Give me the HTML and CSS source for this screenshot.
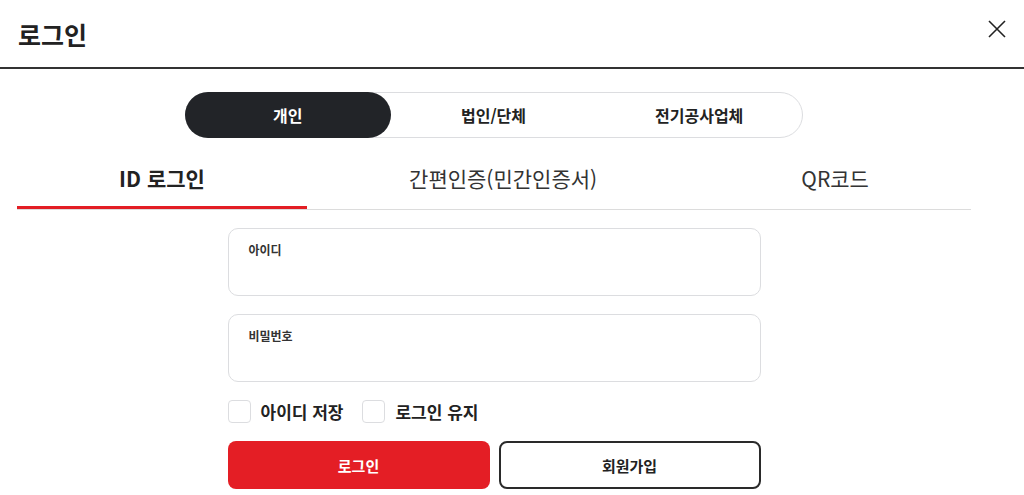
FILE: index.html
```html
<!DOCTYPE html>
<html lang="ko">
<head>
  <meta charset="UTF-8" />
  <title>로그인</title>
  <link rel="stylesheet" href="styles.css">
</head>
<body>
  <div class="header">
    <h2>로그인</h2>
    <button class="close" aria-label="닫기">
      <svg width="20" height="20" viewBox="0 0 20 20"><path d="M2 2L18 18M18 2L2 18" stroke="#222" stroke-width="1.6" fill="none"/></svg>
    </button>
  </div>

  <div class="content">
    <div class="segment">
      <button class="seg active">개인</button>
      <button class="seg">법인/단체</button>
      <button class="seg">전기공사업체</button>
    </div>

    <div class="tabs">
      <div class="tab active">ID 로그인</div>
      <div class="tab">간편인증(민간인증서)</div>
      <div class="tab">QR코드</div>
    </div>

    <div class="form">
      <label class="field">
        <span>아이디</span>
        <input type="text">
      </label>
      <label class="field">
        <span>비밀번호</span>
        <input type="password">
      </label>

      <div class="checks">
        <label class="check"><span class="box"></span>아이디 저장</label>
        <label class="check"><span class="box"></span>로그인 유지</label>
      </div>

      <div class="buttons">
        <button class="btn primary">로그인</button>
        <button class="btn outline">회원가입</button>
      </div>
    </div>
  </div>
</body>
</html>
```

FILE: styles.css
```css
body {
  margin: 0;
  font-family: "Noto Sans CJK KR", "Noto Sans", sans-serif;
  color: #222;
  background: #fff;
}
button {
  font-family: inherit;
  cursor: pointer;
}
.header {
  height: 67px;
  border-bottom: 2px solid #333;
  display: flex;
  align-items: center;
  justify-content: space-between;
  padding: 0 17px 0 18px;
}
.header h2 {
  margin: 0;
  font-size: 25px;
  font-weight: 700;
  color: #222;
}
.close {
  border: none;
  background: none;
  padding: 0;
  width: 20px;
  height: 20px;
  margin-top: -10px;
}
.content {
  width: 954px;
  margin-left: 17px;
}
.segment {
  width: 616px;
  height: 44px;
  margin: 23px auto 0;
  border: 1px solid #dcdde0;
  border-radius: 23px;
  display: flex;
}
.seg {
  flex: 1;
  border: none;
  background: none;
  border-radius: 23px;
  font-size: 16px;
  font-weight: 700;
  color: #222;
  margin: -1px 0;
}
.seg.active {
  background: #222428;
  color: #fff;
  margin-left: -1px;
}
.tabs {
  display: flex;
  margin-top: 20px;
  border-bottom: 1px solid #dcdcdc;
}
.tab {
  flex: 1 1 auto;
  text-align: center;
  font-size: 21px;
  line-height: 28px;
  padding: 6px 0 14px;
  color: #333;
  border-bottom: 3px solid transparent;
}
.tab.active {
  font-weight: 700;
  color: #222;
  border-bottom-color: #e31e24;
}
.form {
  width: 533px;
  margin: 18px auto 0;
}
.field {
  display: block;
  height: 66px;
  border: 1px solid #dcdde0;
  border-radius: 10px;
  padding: 0 20px;
  margin-bottom: 18px;
}
.field span {
  display: block;
  font-size: 12px;
  font-weight: 700;
  color: #333;
  margin-top: 12px;
  line-height: 18px;
}
.field input {
  border: none;
  outline: none;
  width: 100%;
  font-size: 15px;
  padding: 4px 0;
  background: none;
}
.checks {
  display: flex;
  gap: 19px;
  height: 23px;
}
.check {
  display: flex;
  align-items: center;
  gap: 10px;
  font-size: 17px;
  font-weight: 700;
  color: #222;
}
.box {
  width: 21px;
  height: 21px;
  border: 1px solid #dcdde0;
  border-radius: 4px;
}
.buttons {
  display: flex;
  gap: 9px;
  margin-top: 18px;
}
.btn {
  box-sizing: border-box;
  width: 262px;
  height: 48px;
  border-radius: 8px;
  font-size: 15px;
  font-weight: 700;
}
.primary {
  background: #e41e25;
  border: none;
  color: #fff;
}
.outline {
  background: #fff;
  border: 2px solid #2a2a2a;
  color: #222;
}
```
